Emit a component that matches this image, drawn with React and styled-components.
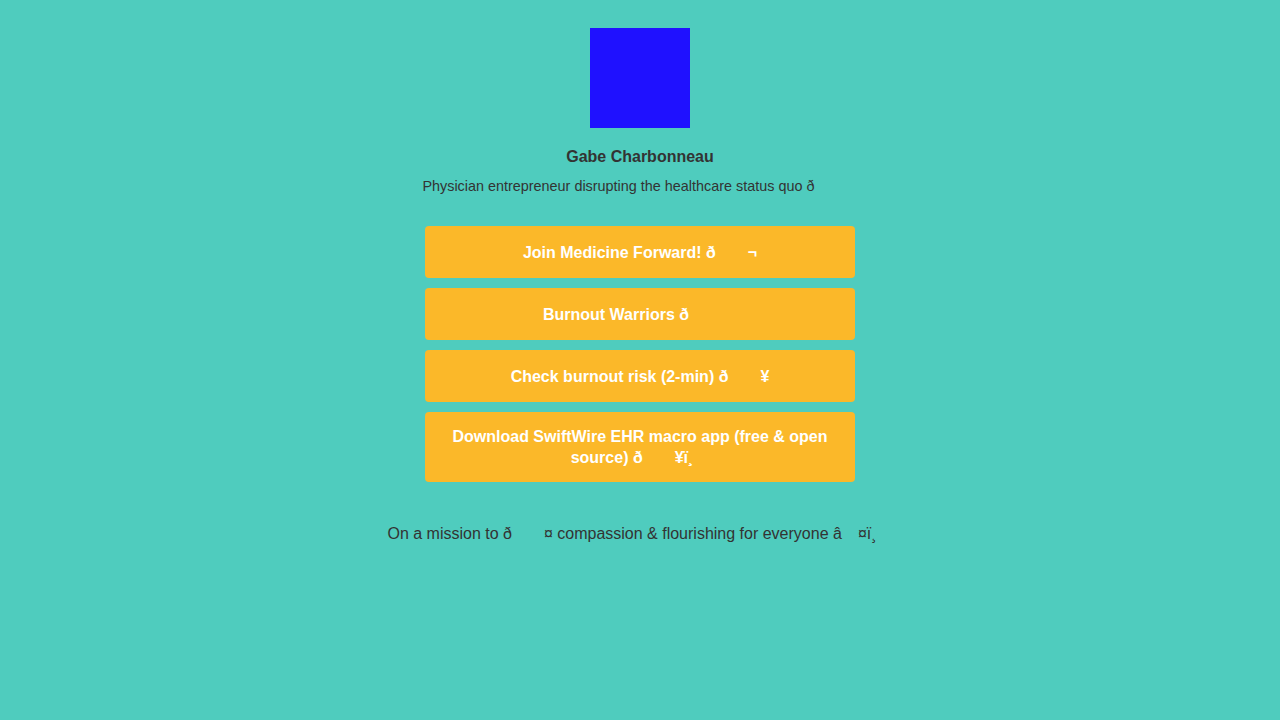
import React from 'react';
import styled, { createGlobalStyle } from 'styled-components';

const GlobalStyle = createGlobalStyle`
	html, body {
		margin: 0;
		padding: 0;
		background: #4fccbe;
		font-family: 'Liberation Sans', Arial, sans-serif;
		color: #333;
	}
`;

const Page = styled.div`
	min-height: 720px;
	display: flex;
	flex-direction: column;
	align-items: center;
	padding-top: 28px;
	box-sizing: border-box;
`;

const Avatar = styled.div`
	width: 100px;
	height: 100px;
	background: #1f11ff;
`;

const Name = styled.div`
	margin-top: 19px;
	font-size: 16px;
	font-weight: bold;
	line-height: 20px;
	text-align: center;
`;

const Bio = styled.div`
	margin-top: 10px;
	font-size: 14.4px;
	line-height: 19px;
	text-align: center;
`;

const Links = styled.div`
	margin-top: 30px;
	width: 430px;
	display: flex;
	flex-direction: column;
	gap: 10px;
`;

const LinkButton = styled.a`
	display: flex;
	align-items: center;
	justify-content: center;
	min-height: 52px;
	box-sizing: border-box;
	padding: 14px 20px;
	background: #fbb829;
	border-radius: 4px;
	color: #fff;
	font-size: 16px;
	font-weight: bold;
	line-height: 21px;
	text-align: center;
	text-decoration: none;
	cursor: pointer;
`;

const Mission = styled.div`
	margin-top: 43px;
	font-size: 16px;
	line-height: 18px;
	text-align: center;
`;

// width taken by the invisible control bytes of the broken emoji
const Gap = styled.span`
	padding-left: ${(p) => p.n}em;
`;

const links = [
	<>Join Medicine Forward! ð<Gap n={2} />¬</>,
	<>Burnout Warriors ð<Gap n={3} /></>,
	<>Check burnout risk (2-min) ð<Gap n={2} />¥</>,
	<>
		Download SwiftWire EHR macro app (free &amp; open source) ð<Gap n={2} />¥ï¸
		<Gap n={1} />
	</>,
];

export default function App() {
	return (
		<>
			<GlobalStyle />
			<Page>
				<Avatar />
				<Name>Gabe Charbonneau</Name>
				<Bio>
					Physician entrepreneur disrupting the healthcare status quo ð<Gap n={3} />
				</Bio>

				<Links>
					{links.map((label, i) => (
						<LinkButton key={i}>
							<span>{label}</span>
						</LinkButton>
					))}
				</Links>

				<Mission>
					On a mission to ð<Gap n={2} />¤ compassion &amp; flourishing for everyone â
					<Gap n={1} />¤ï¸<Gap n={1} />
				</Mission>
			</Page>
		</>
	);
}
